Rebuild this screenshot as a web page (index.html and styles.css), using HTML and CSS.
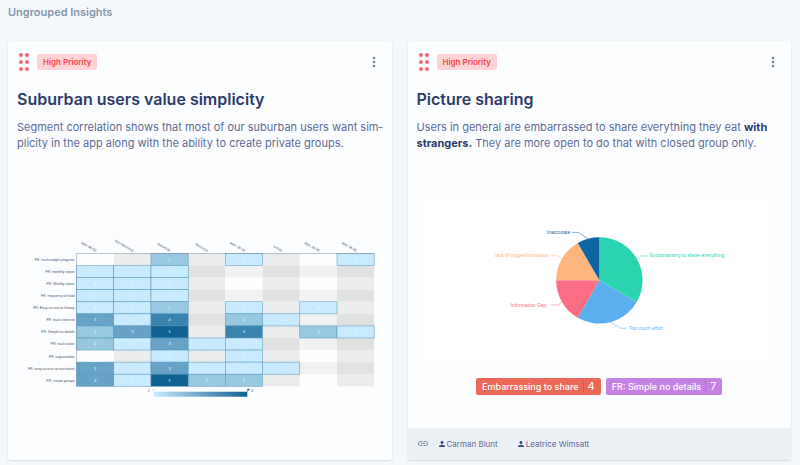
FILE: index.html
```html
<!DOCTYPE html>
<html lang="en">
<head>
<meta charset="utf-8">
<title>Ungrouped Insights</title>
<link rel="stylesheet" href="styles.css">
</head>
<body>
<main class="board">
  <h1 class="board-title">Ungrouped Insights</h1>
  <div class="cards">
    <article class="card">
      <header class="card-head">
        <svg class="grip" viewBox="0 0 12 20" aria-hidden="true"><circle cx="2" cy="3" r="2"/><circle cx="8" cy="3" r="2"/><circle cx="2" cy="10" r="2"/><circle cx="8" cy="10" r="2"/><circle cx="2" cy="17" r="2"/><circle cx="8" cy="17" r="2"/></svg>
        <span class="priority">High Priority</span>
        <button class="more" type="button" aria-label="More options"><svg viewBox="0 0 4 12"><circle cx="2" cy="2" r="1.3"/><circle cx="2" cy="6" r="1.3"/><circle cx="2" cy="10" r="1.3"/></svg></button>
      </header>
      <h2 class="card-title">Suburban users value simplicity</h2>
      <p class="card-text">Segment correlation shows that most of our suburban users want sim&shy;plicity in the app along with the ability to create private groups.</p>
      <figure class="heatmap">
        <svg id="heatmap" viewBox="34 470 732 330" role="img" aria-label="Requests by segment">
          <defs><linearGradient id="scale"><stop offset="0" stop-color="#c9ebff"/><stop offset="1" stop-color="#0e6190"/></linearGradient></defs>
        </svg>
      </figure>
    </article>

    <article class="card">
      <header class="card-head">
        <svg class="grip" viewBox="0 0 12 20" aria-hidden="true"><circle cx="2" cy="3" r="2"/><circle cx="8" cy="3" r="2"/><circle cx="2" cy="10" r="2"/><circle cx="8" cy="10" r="2"/><circle cx="2" cy="17" r="2"/><circle cx="8" cy="17" r="2"/></svg>
        <span class="priority">High Priority</span>
        <button class="more" type="button" aria-label="More options"><svg viewBox="0 0 4 12"><circle cx="2" cy="2" r="1.3"/><circle cx="2" cy="6" r="1.3"/><circle cx="2" cy="10" r="1.3"/></svg></button>
      </header>
      <h2 class="card-title">Picture sharing</h2>
      <p class="card-text">Users in general are embarrassed to share everything they eat <strong>with</strong> <strong>strangers.</strong> They are more open to do that with closed group only.</p>
      <figure class="pie">
        <svg viewBox="424 194 352 172" role="img" aria-label="Reasons for not sharing">
          <g transform="translate(599.6 280.5)">
            <path fill="#2ad4ae" d="M0 0V-43.3A43.3 43.3 0 0 1 37.5 21.65Z"/>
            <path fill="#5ab0ef" d="M0 0L37.5 21.65A43.3 43.3 0 0 1 -21.65 37.5Z"/>
            <path fill="#fb6d85" d="M0 0L-21.65 37.5A43.3 43.3 0 0 1 -43.3 0Z"/>
            <path fill="#fdb77e" d="M0 0H-43.3A43.3 43.3 0 0 1 -21.65 -37.5Z"/>
            <path fill="#0f65a2" d="M0 0L-21.65 -37.5A43.3 43.3 0 0 1 0 -43.3Z"/>
          </g>
          <g fill="none" stroke-width=".5">
            <path stroke="#2ad4ae" d="M637 259l4.500-3H648"/>
            <path stroke="#5ab0ef" d="M611 322.500l10 6H627.500"/>
            <path stroke="#fb6d85" d="M562.500 302l-4.500 3.200H551"/>
            <path stroke="#fdb77e" d="M562.500 259l-4.500-3.200H551"/>
            <path stroke="#0f65a2" d="M588.500 238.800l-10-6.300H572"/>
          </g>
          <g class="pie-label">
            <text x="650" y="257.500" fill="#2ad4ae">Embarrassing to share everything</text>
            <text x="629" y="330" fill="#5ab0ef">Too much effort</text>
            <text x="546.500" y="307" fill="#fb6d85" text-anchor="end">Information Gap</text>
            <text x="549" y="257.500" fill="#fdb77e" text-anchor="end">lack of trigger/motivation</text>
            <text x="570.500" y="234" fill="#0f65a2" text-anchor="end">Inaccurate</text>
          </g>
        </svg>
      </figure>
      <div class="tags">
        <span class="tag tag-red">Embarrassing to share<span class="count">4</span></span>
        <span class="tag tag-purple">FR: Simple no details<span class="count">7</span></span>
      </div>
      <footer class="card-foot">
        <svg class="link-icon" viewBox="2 7 20 10" aria-hidden="true"><path d="M3.900 12c0-1.710 1.390-3.100 3.100-3.100h4V7H7c-2.760 0-5 2.240-5 5s2.240 5 5 5h4v-1.900H7c-1.710 0-3.100-1.390-3.100-3.100zM8 13h8v-2H8v2zm9-6h-4v1.900h4c1.710 0 3.100 1.390 3.100 3.100s-1.390 3.100-3.100 3.100h-4V17h4c2.760 0 5-2.240 5-5s-2.240-5-5-5z"/></svg>
        <span class="person"><svg viewBox="4 4 16 16" aria-hidden="true"><path d="M12 12c2.210 0 4-1.790 4-4s-1.790-4-4-4-4 1.790-4 4 1.790 4 4 4zm0 2c-2.670 0-8 1.340-8 4v2h16v-2c0-2.660-5.330-4-8-4z"/></svg>Carman Blunt</span>
        <span class="person"><svg viewBox="4 4 16 16" aria-hidden="true"><path d="M12 12c2.210 0 4-1.790 4-4s-1.790-4-4-4-4 1.790-4 4 1.790 4 4 4zm0 2c-2.670 0-8 1.340-8 4v2h16v-2c0-2.660-5.330-4-8-4z"/></svg>Leatrice Wimsatt</span>
      </footer>
    </article>
  </div>
</main>
<script src="heatmap.js"></script>
</body>
</html>
```
FILE: styles.css
```css
* { box-sizing: border-box; }

body {
  margin: 0;
  background: #f4f8fb;
  color: #5d6b98;
  font-family: Inter, "Liberation Sans", sans-serif;
}

.board { padding: 4px 9px 4px 8px; }

.board-title {
  margin: 0 0 21px;
  font-size: 11px;
  line-height: 16px;
  font-weight: 600;
  color: #8397ae;
}

.cards {
  display: grid;
  grid-template-columns: 1fr 1fr;
  gap: 16px;
}

.card {
  display: flex;
  flex-direction: column;
  border-radius: 3px;
  background: #fcfdff;
  box-shadow: 0 1px 2px rgba(80, 100, 140, .2);
  overflow: hidden;
}

.card-head {
  display: flex;
  align-items: center;
  padding: 11px 16px 0 11px;
}

.grip { width: 12px; height: 20px; fill: #f26a70; }

.priority {
  margin-left: 6px;
  padding: 0 6px;
  border-radius: 2px;
  background: #fed3d6;
  color: #f8444d;
  font-size: 8px;
  line-height: 16px;
  font-weight: 600;
}

.more {
  display: flex;
  margin-left: auto;
  padding: 0;
  border: 0;
  background: none;
}

.more svg { width: 4px; height: 12px; fill: #7286a0; }

.card-title {
  margin: 17px 9px 0;
  font-size: 16px;
  line-height: 20px;
  font-weight: 600;
  color: #2c3b69;
}

.card-text {
  margin: 10px 9px 0;
  font-size: 11px;
  line-height: 16px;
}

.card-text strong { font-weight: 700; color: #2c3b69; }

.heatmap { margin: 84px 8px 0 9px; }

.pie {
  margin: 43px 16px 0;
  border-radius: 3px;
  background: #fff;
}

.heatmap svg, .pie svg { display: block; width: 100%; }

.pie-label, .axis, .value { font-family: "Liberation Sans", sans-serif; }
.pie-label { font-size: 5px; }
.axis { font-size: 7px; fill: #46536b; }
.value { font-size: 7px; fill: #fff; text-anchor: middle; }

.tags {
  display: flex;
  justify-content: center;
  gap: 5px;
  margin: 12px 0 33px;
}

.tag {
  display: flex;
  align-items: center;
  padding: 0 6px;
  border-radius: 2px;
  color: #fff;
  font-size: 9px;
  line-height: 17px;
  font-weight: 500;
}

.tag-red { background: #ed6856; }
.tag-purple { background: #c681e5; }

.count {
  margin-left: 4px;
  padding-left: 4px;
  border-left: 1px solid rgba(0, 0, 0, .1);
  font-size: 11px;
  line-height: 12px;
  font-weight: 400;
}

.card-foot {
  display: flex;
  align-items: center;
  height: 32px;
  margin-top: auto;
  padding: 0 10px;
  background: #ebf0f5;
  font-size: 8px;
}

.link-icon { width: 10px; height: 5px; margin-right: 11px; fill: #8194ad; }

.person { display: flex; align-items: center; gap: 2px; margin-right: 20px; }
.person svg { width: 6px; height: 6px; fill: #3c5082; }
```
FILE: heatmap.js
```js
const columns = ["Age: 46-50", "Non technical", "Suburban", "Technical", "Age: 18-25", "Urban", "Age: 26-35", "Age: 36-45"];
const rows = [
  ["FR: track weight progress", "00201001"],
  ["FR: monthly report", "11100000"],
  ["FR: Weekly report", "11100000"],
  ["FR: frequency of food", "11100000"],
  ["FR: Easy access to history", "11201010"],
  ["FR: track exercise", "31402100"],
  ["FR: Simple no details", "23504021"],
  ["FR: track water", "21311000"],
  ["FR: organization", "00101000"],
  ["FR: easy access to nutritionist", "31311100"],
  ["FR: create groups", "31522000"]
];
const shades = ["", "#c9ebff", "#98c8e1", "#68a3c7", "#3884ad", "#0e6190"];
const empty = [["#fdfefe", "#ebecec"], ["#f0f1f1", "#e0e1e1"]];
const left = 153, top0 = 507, cellW = 74.3, cellH = 24.1;

const svg = document.getElementById("heatmap");
function add(name, attrs, text) {
  const el = document.createElementNS("http://www.w3.org/2000/svg", name);
  for (const key in attrs) el.setAttribute(key, attrs[key]);
  if (text) el.textContent = text;
  svg.append(el);
}

function eachCell(draw) {
  rows.forEach(([, values], r) => [...values].forEach((v, c) =>
    draw(r, c, +v, left + c * cellW, top0 + r * cellH)));
}

eachCell((r, c, v, x, y) => {
  if (!v) add("rect", { x, y, width: cellW, height: cellH, fill: empty[r % 2][c % 2] });
});
eachCell((r, c, v, x, y) => {
  if (!v) return;
  add("rect", { x, y, width: cellW, height: cellH, fill: shades[v], stroke: "#4f93ba", "stroke-width": 1 });
  add("text", { x: x + cellW / 2, y: y + 15, class: "value" }, String(v));
});
add("path", { d: `M${left} ${top0 + 11 * cellH}V${top0}H${left + 8 * cellW}`, fill: "none", stroke: "#7b8896", "stroke-width": 1 });

rows.forEach(([label], r) =>
  add("text", { x: 149, y: top0 + r * cellH + 15, class: "axis", "text-anchor": "end" }, label));
columns.forEach((label, c) => {
  const x = left + c * cellW + 38, y = top0 - 3;
  add("text", { x, y, class: "axis", "text-anchor": "end", transform: `rotate(30 ${x} ${y})` }, label);
});

add("rect", { x: 307, y: 783, width: 187, height: 10, fill: "url(#scale)" });
add("path", { d: "M303 778h5v5z", fill: "#c9ebff" });
add("path", { d: "M494 783v-6h6z", fill: "#0e6190" });
add("text", { x: 295, y: 783, class: "axis" }, "1");
add("text", { x: 502, y: 783, class: "axis" }, "6");
```
